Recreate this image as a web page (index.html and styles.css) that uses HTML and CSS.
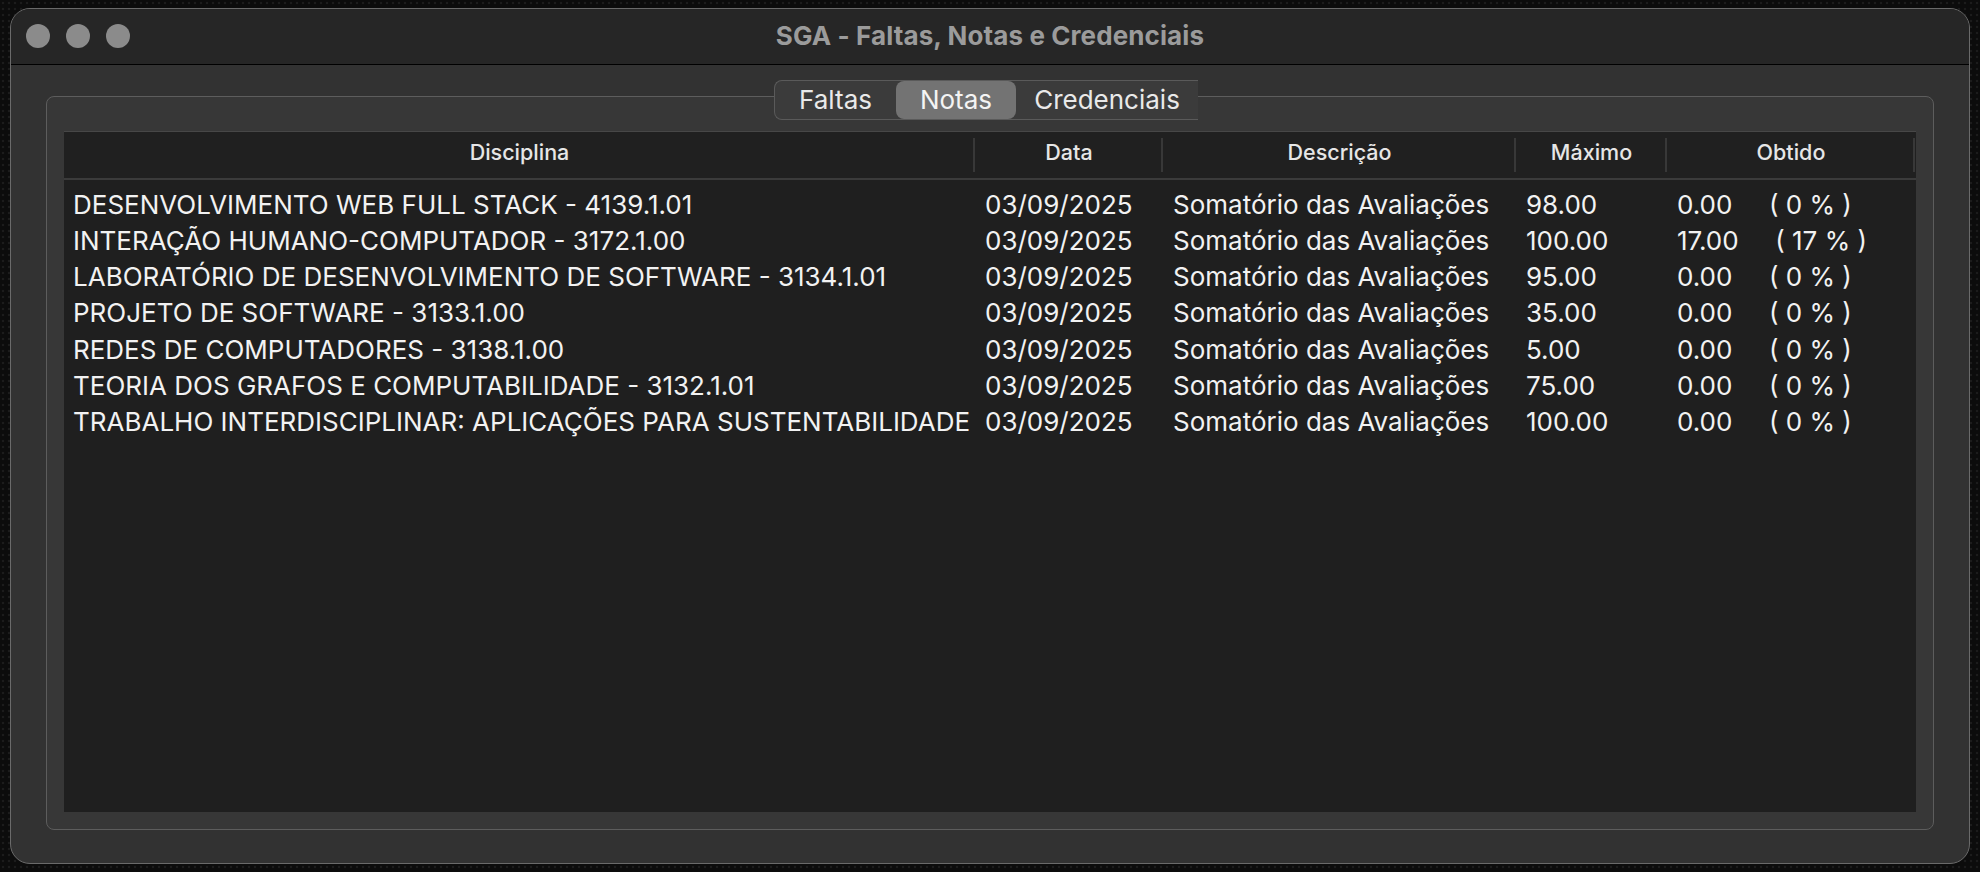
FILE: index.html
```html
<!DOCTYPE html>
<html lang="pt">
<head>
<meta charset="utf-8">
<title>SGA - Faltas, Notas e Credenciais</title>
<link rel="stylesheet" href="styles.css">
</head>
<body>
<div class="window">
  <div class="titlebar">
    <div class="lights">
      <span class="light"></span><span class="light"></span><span class="light"></span>
    </div>
    <div class="title">SGA - Faltas, Notas e Credenciais</div>
    <div></div>
  </div>
  <div class="content">
    <div class="tabs">
      <div class="seg">
        <span class="tab t-faltas">Faltas</span>
        <span class="tab t-notas active">Notas</span>
        <span class="tab t-cred">Credenciais</span>
      </div>
    </div>
    <div class="group">
      <div class="table">
        <div class="thead">
          <div class="th">Disciplina</div>
          <div class="th">Data</div>
          <div class="th">Descrição</div>
          <div class="th">Máximo</div>
          <div class="th">Obtido</div>
        </div>
        <div class="tbody">
          <div class="tr"><div class="td c1">DESENVOLVIMENTO WEB FULL STACK - 4139.1.01</div><div class="td">03/09/2025</div><div class="td">Somatório das Avaliações</div><div class="td">98.00</div><div class="td ob">0.00     ( 0 % )</div></div>
          <div class="tr"><div class="td c1">INTERAÇÃO HUMANO-COMPUTADOR - 3172.1.00</div><div class="td">03/09/2025</div><div class="td">Somatório das Avaliações</div><div class="td">100.00</div><div class="td ob">17.00     ( 17 % )</div></div>
          <div class="tr"><div class="td c1">LABORATÓRIO DE DESENVOLVIMENTO DE SOFTWARE - 3134.1.01</div><div class="td">03/09/2025</div><div class="td">Somatório das Avaliações</div><div class="td">95.00</div><div class="td ob">0.00     ( 0 % )</div></div>
          <div class="tr"><div class="td c1">PROJETO DE SOFTWARE - 3133.1.00</div><div class="td">03/09/2025</div><div class="td">Somatório das Avaliações</div><div class="td">35.00</div><div class="td ob">0.00     ( 0 % )</div></div>
          <div class="tr"><div class="td c1">REDES DE COMPUTADORES - 3138.1.00</div><div class="td">03/09/2025</div><div class="td">Somatório das Avaliações</div><div class="td">5.00</div><div class="td ob">0.00     ( 0 % )</div></div>
          <div class="tr"><div class="td c1">TEORIA DOS GRAFOS E COMPUTABILIDADE - 3132.1.01</div><div class="td">03/09/2025</div><div class="td">Somatório das Avaliações</div><div class="td">75.00</div><div class="td ob">0.00     ( 0 % )</div></div>
          <div class="tr"><div class="td c1">TRABALHO INTERDISCIPLINAR: APLICAÇÕES PARA SUSTENTABILIDADE</div><div class="td">03/09/2025</div><div class="td">Somatório das Avaliações</div><div class="td">100.00</div><div class="td ob">0.00     ( 0 % )</div></div>
        </div>
      </div>
    </div>
  </div>
</div>
</body>
</html>
```
FILE: styles.css
```css
* { box-sizing: border-box; }
html, body { margin: 0; padding: 0; }
body {
  width: 1980px;
  height: 872px;
  overflow: hidden;
  background-color: #0c0c0c;
  background-image: radial-gradient(#1c1c1c 1px, transparent 1.6px);
  background-size: 6px 6px;
  font-family: Inter, "Noto Sans", "Liberation Sans", sans-serif;
  padding: 8px 10px 0 10px;
}
.window {
  width: 1960px;
  height: 856px;
  border: 1px solid #6a6a6a;
  border-radius: 20px;
  background: #323232;
  overflow: hidden;
  display: flex;
  flex-direction: column;
}
.titlebar {
  height: 56px;
  flex: none;
  background: #262626;
  border-bottom: 1px solid #000;
  display: grid;
  grid-template-columns: 1fr auto 1fr;
  align-items: center;
  padding: 0 15px;
}
.lights { display: flex; gap: 16px; margin-top: -2px; }
.light {
  width: 24px; height: 24px; border-radius: 50%;
  background: #8b8b8b;
}
.title {
  font-weight: 700;
  font-size: 26px;
  color: #9b9b9b;
  letter-spacing: 0.1px;
  margin-top: -2px;
}
.content {
  flex: 1;
  padding: 15px 35px 33px 35px;
  display: flex;
  flex-direction: column;
}
.tabs {
  display: flex;
  justify-content: center;
  position: relative;
  z-index: 1;
  height: 40px;
}
.seg {
  display: flex;
  height: 40px;
  margin-right: 8px;
  background: #3b3b3b;
  border: 1px solid #5a5a5a;
  border-right: none;
  border-radius: 8px 0 0 8px;
  align-items: stretch;
}
.tab {
  display: flex; align-items: center; justify-content: center;
  font-size: 26px;
  color: #e9e9e9;
  padding-bottom: 2px;
}
.t-faltas { width: 121px; }
.t-notas { width: 120px; }
.t-cred { width: 182px; }
.tab.active {
  background: #737373;
  border-radius: 8px;
  color: #f4f4f4;
}
.group {
  flex: 1;
  margin-top: -24px;
  background: #373737;
  border: 1px solid #5d5d5d;
  border-radius: 8px;
  padding: 34px 17px 17px 17px;
  display: flex;
}
.table {
  flex: 1;
  background: #1f1f1f;
  border-top: 1px solid #474747;
  display: flex;
  flex-direction: column;
}
.thead, .tr {
  display: grid;
  grid-template-columns: 911px 188px 353px 151px 248px;
}
.thead {
  height: 48px;
  border-bottom: 2px solid #3b3b3b;
  background: #202020;
}
.th {
  position: relative;
  display: flex; align-items: center; justify-content: center;
  font-size: 21.5px;
  font-weight: 500;
  color: #e6e6e6;
  padding-bottom: 6px;
}
.th::after {
  content: "";
  position: absolute;
  right: 0; top: 6px; bottom: 6px;
  width: 2px;
  background: #383838;
}
.tbody { padding-top: 6px; }
.tr { height: 36.25px; }
.td {
  display: flex; align-items: center;
  font-size: 26px;
  color: #f2f2f2;
  padding-left: 10px;
  white-space: pre;
  overflow: hidden;
}
.td.c1 { padding-left: 9px; }
```
